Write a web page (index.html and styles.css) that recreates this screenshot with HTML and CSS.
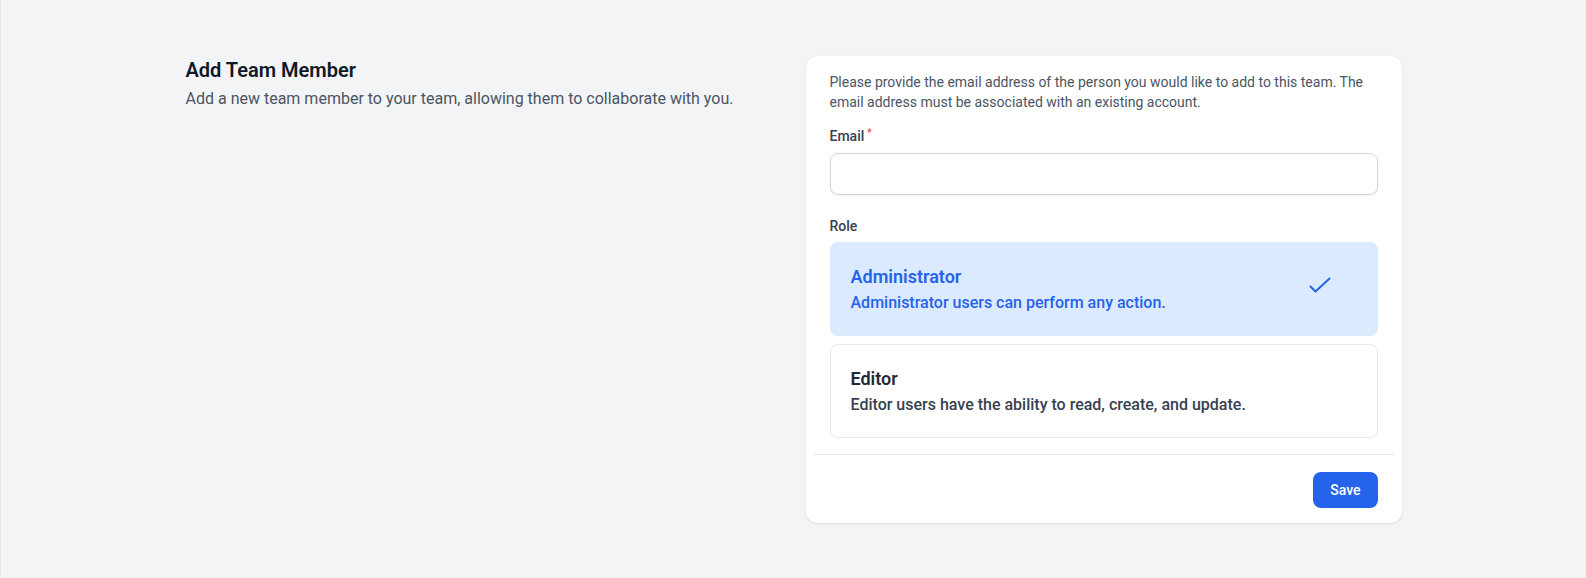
FILE: index.html
```html
<!DOCTYPE html>
<html lang="en">
<head>
<meta charset="utf-8">
<title>Add Team Member</title>
<link rel="stylesheet" href="styles.css">
</head>
<body>
<div class="page">
  <div class="container">
    <div class="section-title">
      <h3 class="title">Add Team Member</h3>
      <p class="subtitle">Add a new team member to your team, allowing them to collaborate with you.</p>
    </div>
    <div class="card">
      <div class="card-body">
        <p class="intro">Please provide the email address of the person you would like to add to this team. The email address must be associated with an existing account.</p>
        <label class="label label-email">Email<span class="req">*</span></label>
        <input class="input" type="email">
        <div class="label label-role">Role</div>
        <div class="roles">
          <div class="role role-active">
            <div class="role-text">
              <div class="role-name">Administrator</div>
              <div class="role-desc">Administrator users can perform any action.</div>
            </div>
            <svg class="check" width="22" height="17" viewBox="0 0 22 17"><polyline points="1.5,9.5 6.5,14.5 20.5,1.5" fill="none" stroke="#2563eb" stroke-width="2" stroke-linecap="round" stroke-linejoin="round"/></svg>
          </div>
          <div class="role">
            <div class="role-text">
              <div class="role-name">Editor</div>
              <div class="role-desc">Editor users have the ability to read, create, and update.</div>
            </div>
          </div>
        </div>
      </div>
      <div class="card-footer">
        <button class="btn" type="button">Save</button>
      </div>
    </div>
  </div>
</div>
</body>
</html>
```
FILE: styles.css
```css
* { box-sizing: border-box; }
html, body { margin: 0; padding: 0; }
body {
  font-family: Roboto, "Liberation Sans", Arial, sans-serif;
  background: #f3f4f6;
  color: #111827;
}
.page {
  min-height: 100vh;
  border-left: 1px solid #e5e7eb;
  padding-top: 56px;
}
.container {
  max-width: 1216px;
  margin: 0 auto;
  display: grid;
  grid-template-columns: 1fr 1fr;
  column-gap: 24px;
  align-items: start;
}
.title {
  margin: 0;
  font-size: 20px;
  line-height: 28px;
  font-weight: 600;
  color: #111827;
}
.subtitle {
  margin: 3px 0 0;
  font-size: 16px;
  line-height: 24px;
  color: #4b5563;
}
.card {
  background: #fff;
  border-radius: 12px;
  box-shadow: 0 1px 3px rgba(0,0,0,0.08), 0 1px 2px rgba(0,0,0,0.04);
}
.card-body {
  padding: 16px 24px 16px;
  display: flex;
  flex-direction: column;
}
.intro {
  margin: 0;
  font-size: 14px;
  line-height: 20px;
  color: #4b5563;
}
.label {
  font-size: 14px;
  line-height: 20px;
  font-weight: 500;
  color: #374151;
}
.label-email { margin-top: 14px; }
.req {
  color: #ef4444;
  font-size: 10px;
  vertical-align: top;
  line-height: 14px;
  margin-left: 3px;
}
.input {
  margin-top: 7px;
  height: 42px;
  width: 100%;
  border: 1px solid #d1d5db;
  border-radius: 8px;
  background: #fff;
  box-shadow: 0 1px 2px rgba(0,0,0,0.05);
  font: inherit;
}
.label-role { margin-top: 21px; }
.roles {
  margin-top: 6px;
  display: flex;
  flex-direction: column;
  gap: 8px;
}
.role {
  display: flex;
  align-items: center;
  padding: 20px;
  border: 1px solid #e5e7eb;
  border-radius: 8px;
  background: #fff;
}
.role-text { flex: 1; }
.role-name {
  font-size: 18px;
  line-height: 28px;
  font-weight: 600;
  color: #1f2937;
}
.role-desc {
  font-size: 16px;
  line-height: 24px;
  font-weight: 500;
  color: #374151;
}
.role-active {
  background: #dbeafe;
  border-color: #dbeafe;
}
.role-active .role-name,
.role-active .role-desc { color: #2563eb; }
.check {
  margin-right: 26px;
  margin-bottom: 7px;
  flex: none;
}
.card-footer {
  margin: 0 8px;
  border-top: 1px solid #e5e7eb;
  padding: 17px 16px 15px;
  display: flex;
  justify-content: flex-end;
}
.btn {
  height: 36px;
  padding: 0 17px;
  border: none;
  border-radius: 8px;
  background: #2563eb;
  color: #fff;
  font-family: inherit;
  font-size: 14px;
  font-weight: 500;
}
```
